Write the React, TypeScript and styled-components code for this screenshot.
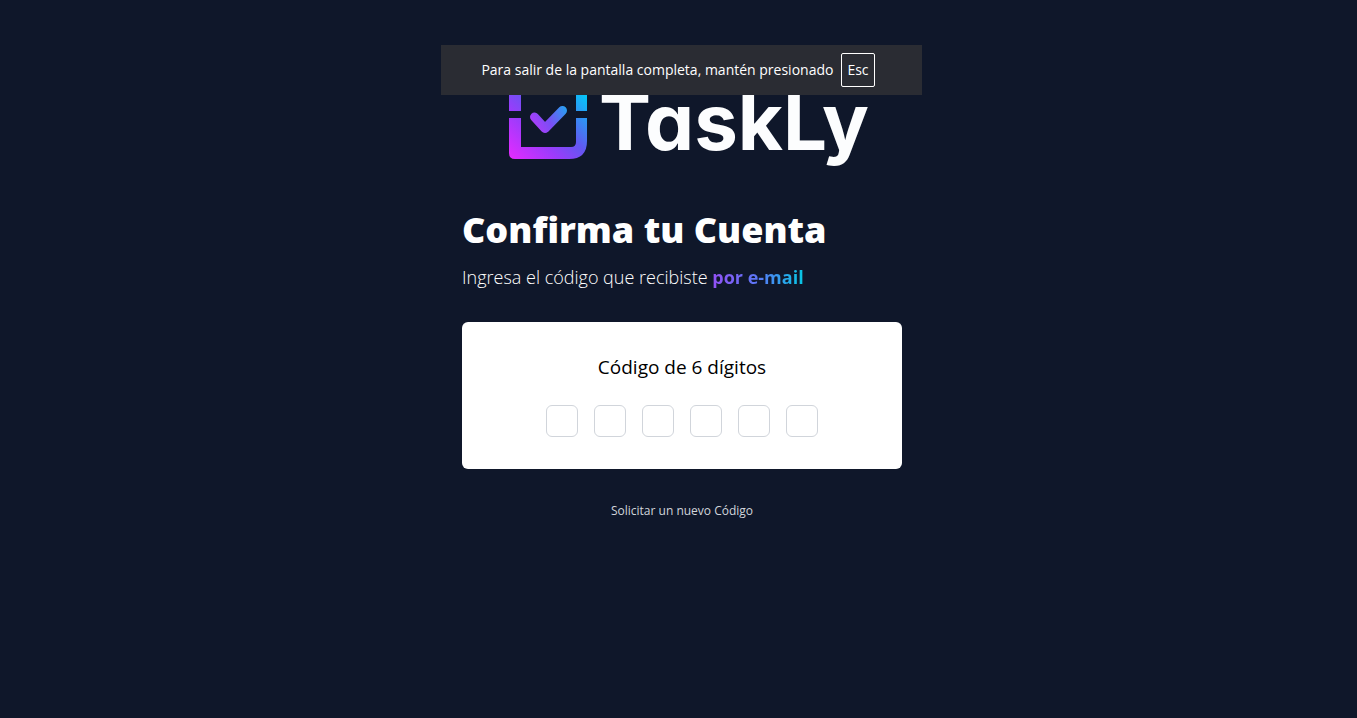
import React from "react";
import styled, { createGlobalStyle } from "styled-components";

const GlobalStyle = createGlobalStyle`
  *, *::before, *::after { box-sizing: border-box; }
  body {
    margin: 0;
    background: #0f172a;
    font-family: "Segoe UI", "Open Sans", "Noto Sans", sans-serif;
  }
`;

const Page = styled.main`
  min-height: 100vh;
  padding: 80px 0 40px 7px;
  color: #ffffff;
`;

const Content = styled.div`
  width: 440px;
  max-width: 100%;
  margin: 0 auto;
`;

const Logo = styled.div`
  display: flex;
  align-items: flex-start;
  gap: 12px;
  height: 87px;
  padding-left: 47px;
`;

const Wordmark = styled.span`
  color: #fcfdfe;
  font-family: Inter, sans-serif;
  font-size: 78px;
  font-weight: 700;
  line-height: 84px;
  font-feature-settings: "cv11";
`;

const Title = styled.h1`
  margin: 40px 0 0;
  font-size: 36px;
  font-weight: 800;
  line-height: 46px;
  white-space: nowrap;
`;

const Lead = styled.p`
  margin: 10px 0 0;
  font-size: 18px;
  font-weight: 300;
  line-height: 28px;
  white-space: nowrap;
`;

const Accent = styled.span`
  background: linear-gradient(90deg, #9350f5, #5a78f7 50%, #06c8e4);
  background-clip: text;
  color: transparent;
  font-weight: 700;
`;

const Card = styled.form`
  display: flex;
  flex-direction: column;
  align-items: center;
  gap: 24px;
  margin: 31px 0 0;
  padding: 32px;
  border-radius: 6px;
  background: #ffffff;
`;

const Legend = styled.label`
  color: #000000;
  font-size: 19px;
  line-height: 27px;
`;

const Digits = styled.div`
  display: flex;
  gap: 16px;
`;

const Digit = styled.input`
  width: 32px;
  height: 32px;
  padding: 0;
  border: 1px solid #d1d5db;
  border-radius: 6px;
  background: #ffffff;
  color: #000000;
  font: inherit;
  text-align: center;
`;

const Resend = styled.a`
  display: block;
  margin-top: 32px;
  color: #d1d5db;
  font-size: 12px;
  line-height: 20px;
  text-align: center;
  text-decoration: none;
`;

const ToastLayer = styled.div`
  position: absolute;
  top: 45px;
  left: 5px;
  right: 0;
  display: flex;
  justify-content: center;
`;

const Toast = styled.div`
  display: flex;
  align-items: center;
  justify-content: center;
  gap: 8px;
  width: 481px;
  height: 50px;
  padding-right: 6px;
  background: #2a2c33;
  color: #ffffff;
  font-size: 14px;
  line-height: 32px;
  white-space: nowrap;
`;

const Key = styled.kbd`
  padding: 0 5px;
  border: 1px solid #ffffff;
  border-radius: 2px;
  font: inherit;
`;

function LogoMark() {
  return (
    <svg width="78" height="80" viewBox="0 0 78 80" aria-hidden="true">
      <defs>
        <linearGradient id="mark" gradientUnits="userSpaceOnUse" x1="2" y1="78" x2="76" y2="4">
          <stop offset="0" stopColor="#e22bff" />
          <stop offset="0.32" stopColor="#9a3cfb" />
          <stop offset="0.55" stopColor="#6158f0" />
          <stop offset="0.92" stopColor="#06c4f8" />
        </linearGradient>
        <linearGradient id="tick" gradientUnits="userSpaceOnUse" x1="24" y1="48" x2="56" y2="28">
          <stop offset="0" stopColor="#b03cfa" />
          <stop offset="0.45" stopColor="#7b4df5" />
          <stop offset="1" stopColor="#2b9cf2" />
        </linearGradient>
      </defs>
      <path
        fill="url(#mark)"
        d="M0 38H12V67H62Q67 67 67 62V38H78V61Q78 79 60 79H6Q0 79 0 73ZM0 31V6Q0 0 6 0H12V31ZM67 31V0H72Q78 0 78 6V31Z"
      />
      <path
        d="M25.500 37L36 48.500L53.500 30.500"
        fill="none"
        stroke="url(#tick)"
        strokeWidth="9"
        strokeLinecap="round"
        strokeLinejoin="round"
      />
    </svg>
  );
}

export default function App() {
  return (
    <>
      <GlobalStyle />
      <Page>
        <Content>
          <Logo>
            <LogoMark />
            <Wordmark>TaskLy</Wordmark>
          </Logo>
          <Title>Confirma tu Cuenta</Title>
          <Lead>
            Ingresa el código que recibiste <Accent>por e-mail</Accent>
          </Lead>
          <Card>
            <Legend htmlFor="digit-1">Código de 6 dígitos</Legend>
            <Digits>
              {[1, 2, 3, 4, 5, 6].map((n) => (
                <Digit
                  key={n}
                  id={`digit-${n}`}
                  aria-label={`Dígito ${n}`}
                  inputMode="numeric"
                  maxLength={1}
                />
              ))}
            </Digits>
          </Card>
          <Resend href="#nuevo-codigo">Solicitar un nuevo Código</Resend>
        </Content>
      </Page>
      <ToastLayer>
        <Toast role="status">
          <span>Para salir de la pantalla completa, mantén presionado</span>
          <Key>Esc</Key>
        </Toast>
      </ToastLayer>
    </>
  );
}
